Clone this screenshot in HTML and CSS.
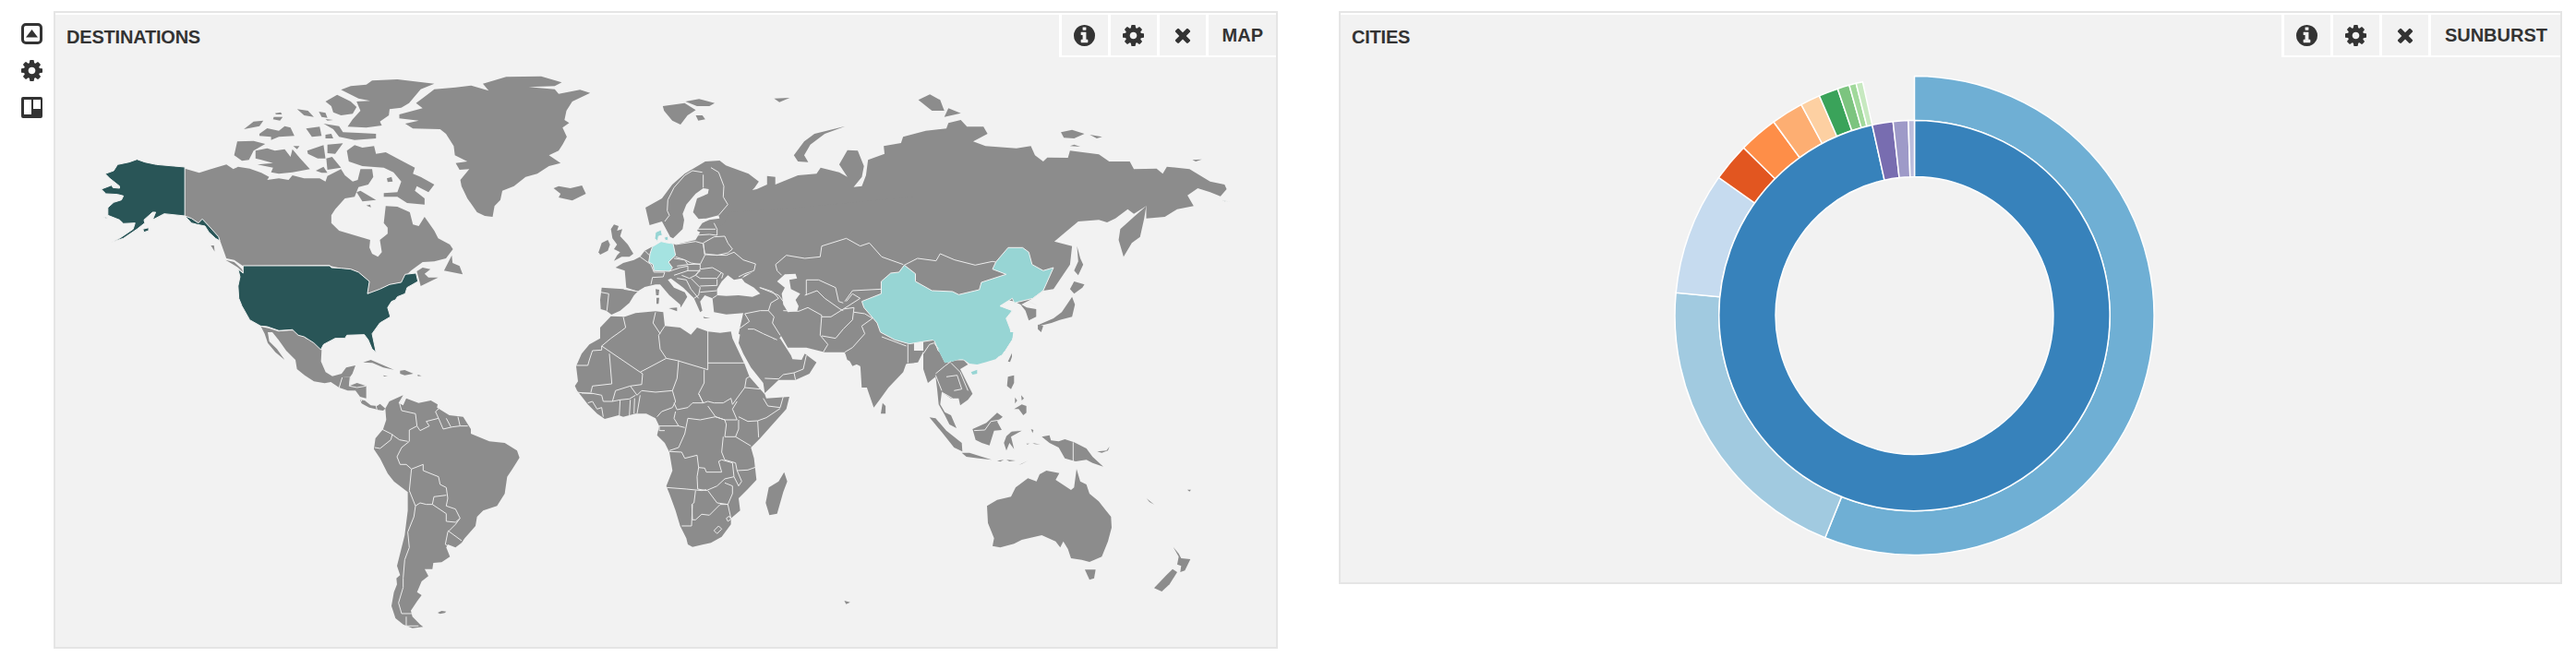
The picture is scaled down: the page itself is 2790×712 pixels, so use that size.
FILE: index.html
```html
<!DOCTYPE html>
<html lang="en">
<head>
<meta charset="utf-8">
<title>Dashboard</title>
<link rel="stylesheet" href="styles.css">
</head>
<body>
<svg class="defs" width="0" height="0" aria-hidden="true">
  <symbol id="i-cog" viewBox="128 128 1536 1536"><path d="M1152 896q0-106-75-181t-181-75-181 75-75 181 75 181 181 75 181-75 75-181zm512-109v222q0 12-8 23t-20 13l-185 28q-19 54-39 91 35 50 107 138 10 12 10 25t-9 23q-27 37-99 108t-94 71q-12 0-26-9l-138-108q-44 23-91 38-16 136-29 186-7 28-36 28h-222q-14 0-24.5-8.5t-11.5-21.5l-28-184q-49-16-90-37l-141 107q-10 9-25 9-14 0-25-11-126-114-165-168-7-10-7-23 0-12 8-23 15-21 51-66.5t54-70.5q-27-50-41-99l-183-27q-13-2-21-12.5t-8-23.5v-222q0-12 8-23t19-13l186-28q14-46 39-92-40-57-107-138-10-12-10-24 0-10 9-23 26-36 98.5-107.5t94.5-71.5q13 0 26 10l138 107q44-23 91-38 16-136 29-186 7-28 36-28h222q14 0 24.5 8.5t11.5 21.5l28 184q49 16 90 37l142-107q9-9 24-9 13 0 25 10 129 119 165 170 7 8 7 22 0 12-8 23-15 21-51 66.5t-54 70.5q26 50 41 98l183 28q13 2 21 12.5t8 23.5z"/></symbol>
  <symbol id="i-info" viewBox="128 128 1536 1536"><path d="M1152 1376v-160q0-14-9-23t-23-9h-96v-512q0-14-9-23t-23-9h-320q-14 0-23 9t-9 23v160q0 14 9 23t23 9h96v320h-96q-14 0-23 9t-9 23v160q0 14 9 23t23 9h448q14 0 23-9t9-23zm-128-896v-160q0-14-9-23t-23-9h-192q-14 0-23 9t-9 23v160q0 14 9 23t23 9h192q14 0 23-9t9-23zm640 416q0 209-103 385.5t-279.5 279.5-385.5 103-385.5-103-279.5-279.5-103-385.5 103-385.5 279.5-279.5 385.5-103 385.5 103 279.5 279.5 103 385.5z"/></symbol>
  <symbol id="i-x" viewBox="110 238 1188 1316"><path d="M1298 1322q0 40-28 68l-136 136q-28 28-68 28t-68-28l-294-294-294 294q-28 28-68 28t-68-28l-136-136q-28-28-28-68t28-68l294-294-294-294q-28-28-28-68t28-68l136-136q28-28 68-28t68 28l294 294 294-294q28-28 68-28t68 28l136 136q28 28 28 68t-28 68l-294 294 294 294q28 28 28 68z"/></symbol>
</svg>
<div class="page">
  <nav class="sidebar">
    <svg class="side-icon" viewBox="0 0 23 23"><rect x="1.5" y="1.5" width="20" height="20" rx="3.5" class="ic-line"/><path d="M5 15.5 11.5 7 18 15.5z"/></svg>
    <svg class="side-icon"><use href="#i-cog"/></svg>
    <svg class="side-icon" viewBox="0 0 23 23"><path fill-rule="evenodd" d="M2 0h19a2 2 0 0 1 2 2v19a2 2 0 0 1-2 2H2a2 2 0 0 1-2-2V2a2 2 0 0 1 2-2zM3 3v16h8V3zm10 0v10h8V3z"/></svg>
  </nav>

  <section class="panel panel-map">
    <header class="panel-head">
      <h2 class="panel-title">DESTINATIONS</h2>
      <div class="tools">
        <button class="tool"><svg class="tool-icon"><use href="#i-info"/></svg></button>
        <button class="tool"><svg class="tool-icon"><use href="#i-cog"/></svg></button>
        <button class="tool"><svg class="tool-x"><use href="#i-x"/></svg></button>
        <button class="tool tool-text">MAP</button>
      </div>
    </header>
    <svg class="map" viewBox="60 62 1322 639">
      <!-- coordinates in zoomed frames: each group maps to page pixels -->
      <g transform="translate(60,60) scale(.4209,.3333)" class="land">
        <path d="M1100,92 L1160,70 L1250,68 L1303,88 L1285,100 L1218,103 L1285,110 L1295,125 L1350,112 L1376,122 L1330,150 L1315,180 L1310,210 L1322,220 L1305,235 L1316,265 L1305,290 L1295,310 L1270,325 L1300,350 L1270,360 L1240,385 L1210,395 L1180,425 L1150,440 L1145,470 L1130,490 L1125,525 L1105,522 L1085,510 L1060,465 L1045,425 L1042,405 L1065,370 L1040,372 L1030,350 L1060,345 L1028,325 L1025,295 L1005,255 L990,240 L920,238 L900,222 L935,212 L885,205 L885,192 L945,172 L928,155 L955,130 L975,110 L1030,104 L1070,98 L1115,115 Z"/>
        <path d="M333,368 L370,382 L400,370 L440,355 L458,370 L470,362 L500,368 L530,382 L550,395 L545,405 L575,400 L600,405 L610,390 L640,400 L680,400 L695,410 L700,392 L735,370 L745,390 L765,410 L778,405 L785,370 L815,370 L818,395 L805,420 L780,428 L770,460 L745,465 L720,500 L710,520 L710,545 L730,570 L770,585 L810,600 L808,625 L815,645 L830,655 L840,640 L835,600 L855,580 L855,560 L845,545 L850,490 L880,492 L912,510 L920,550 L935,555 L950,525 L975,570 L985,595 L1015,615 L1023,630 L1005,660 L975,670 L945,672 L915,700 L905,712 L928,708 L930,730 L890,738 L860,745 L835,760 L810,775 L803,770 L808,735 L780,705 L760,695 L735,692 L708,685 L706,682 L482,684 L460,665 L440,660 L430,625 L423,600 L395,555 L378,532 L368,545 L333,522 Z"/>
        <path d="M940,750 L985,722 L960,722 L950,710 L965,695 L945,690 L930,702 L935,725 Z"/>
        <path d="M1000,700 L1020,650 L1022,675 L1040,685 L1048,712 Z"/>
        <path d="M400,618 L408,618 L410,638 Z"/><path d="M438,665 L460,672 L480,695 L485,708 L470,690 Z"/>
        <path d="M735,112 L760,100 L800,95 L815,82 L880,78 L975,92 L940,110 L930,125 L910,155 L890,170 L860,175 L858,195 L835,215 L840,228 L800,235 L752,232 L765,208 L785,180 L775,150 L810,148 L780,140 Z"/>
        <path d="M695,150 L725,128 L760,150 L775,168 L765,190 L735,195 L715,185 L710,165 Z"/>
        <path d="M622,175 L650,180 L665,200 L640,195 Z"/><path d="M678,183 L695,187 L700,203 L685,200 Z"/><path d="M695,207 L715,210 L700,212 Z"/>
        <path d="M690,222 L730,230 L740,250 L780,252 L825,255 L825,270 L770,275 L730,265 L715,240 Z"/>
        <path d="M645,238 L680,232 L685,262 L660,265 Z"/><path d="M695,258 L710,255 L715,270 L695,270 Z"/>
        <path d="M562,200 L585,200 L578,212 L560,208 Z"/><path d="M565,188 L580,185 L583,192 L568,192 Z"/>
        <path d="M485,240 L510,215 L535,212 L525,230 Z"/>
        <path d="M525,255 L545,237 L575,245 L590,230 L605,235 L615,262 L575,265 L555,275 L555,265 L525,262 Z"/>
        <path d="M468,280 L510,278 L540,288 L510,310 L498,340 L480,343 L460,325 Z"/>
        <path d="M515,310 L545,302 L565,310 L590,305 L605,330 L610,305 L630,335 L655,370 L610,380 L575,385 L555,380 L560,365 L520,355 L560,350 L530,340 L515,335 Z"/>
        <path d="M612,295 L628,295 L622,305 Z"/><path d="M648,310 L690,292 L695,335 L675,335 L650,320 Z"/><path d="M700,290 L740,286 L720,320 L700,318 Z"/>
        <path d="M750,310 L770,292 L790,300 L820,295 L825,320 L850,315 L880,335 L925,365 L920,385 L940,395 L975,420 L960,445 L930,425 L925,440 L950,465 L950,485 L905,480 L880,460 L845,460 L845,448 L880,445 L890,410 L870,380 L845,365 L790,360 L755,345 Z"/>
        <path d="M775,445 L785,440 L825,470 L790,475 Z"/><path d="M697,335 L712,330 L735,365 L700,372 Z"/><path d="M670,375 L690,362 L700,382 L685,382 Z"/>
        <path d="M853,400 L865,395 L868,410 L855,412 Z"/><path d="M800,488 L810,485 L812,494 Z"/>
        <path d="M1282,432 L1295,425 L1325,432 L1355,423 L1365,450 L1330,472 L1295,462 L1300,450 Z"/>
      </g>

      <g transform="translate(650,60) scale(.4464,.3333)" class="land">
        <path d="M110,495 L150,465 L175,420 L205,385 L255,345 L290,342 L305,358 L320,365 L360,385 L385,410 L375,430 L350,465 L340,455 L325,425 L345,425 L345,445 L380,435 L405,420 L405,392 L425,395 L425,420 L480,390 L525,385 L535,365 L580,380 L600,395 L580,355 L600,308 L625,310 L640,360 L635,395 L615,428 L635,425 L645,390 L650,340 L690,320 L688,295 L730,285 L735,265 L790,245 L840,238 L845,220 L875,210 L890,232 L930,232 L940,255 L905,280 L935,295 L1010,302 L1045,295 L1055,325 L1075,345 L1085,332 L1135,333 L1140,310 L1210,322 L1235,345 L1285,345 L1295,370 L1350,368 L1365,385 L1375,362 L1430,370 L1480,410 L1515,420 L1520,435 L1505,458 L1480,445 L1450,432 L1425,455 L1440,490 L1400,500 L1370,525 L1325,530 L1325,490 L1295,515 L1280,500 L1250,530 L1230,543 L1210,535 L1160,540 L1102,605 L1145,620 L1140,680 L1100,760 L1075,765 L1050,790 L1022,810 L1035,820 L1058,825 L1058,850 L1040,862 L1032,830 L1020,810 L1005,800 L940,780 L640,790 L300,640 L200,610 L170,590 L150,540 L120,552 Z"/>
        <path d="M152,165 L205,155 L232,178 L212,195 L195,225 L175,212 L155,180 Z"/><path d="M207,150 L240,142 L278,155 L265,165 L235,165 Z"/><path d="M232,195 L248,195 L255,208 L238,212 Z"/>
        <path d="M422,140 L460,138 L435,152 Z"/>
        <path d="M595,230 L520,255 L495,280 L470,325 L480,345 L505,347 L495,325 L510,290 L545,255 Z"/>
        <path d="M772,145 L800,127 L825,145 L835,180 L805,180 Z"/><path d="M845,172 L875,188 L835,200 Z"/>
        <path d="M1118,250 L1145,242 L1175,255 L1150,270 L1125,268 Z"/><path d="M1188,258 L1218,265 L1205,270 Z"/><path d="M1140,295 L1165,297 L1150,290 Z"/>
        <path d="M1437,340 L1460,338 L1445,345 Z"/>
        <path d="M1157,620 L1165,660 L1172,680 L1160,715 L1150,700 L1160,670 Z"/>
        <path d="M1325,490 L1320,530 L1310,590 L1290,610 L1270,655 L1258,600 L1262,565 L1295,525 Z"/>
        <path d="M1150,735 L1175,745 L1170,755 L1150,775 L1140,760 Z"/>
        <path d="M1145,785 L1152,810 L1145,850 L1115,860 L1095,870 L1065,880 L1065,875 L1100,855 L1120,835 Z"/>
        <path d="M1062,875 L1075,880 L1070,900 L1062,890 Z"/>
      </g>

      <g transform="translate(630,180) scale(.3333)" class="land">
        <path d="M290,250 L230,262 L205,275 L190,295 L170,305 L135,315 L110,330 L140,340 L145,395 L185,408 L165,405 L135,400 L65,395 L60,435 L62,465 L80,470 L97,483 L125,470 L155,445 L170,420 L185,405 L205,393 L240,385 L255,385 L285,420 L320,450 L322,460 L343,425 L335,410 L300,395 L280,370 L290,365 L330,395 L365,430 L385,475 L392,470 L385,440 L400,420 L425,430 L430,475 L470,482 L525,478 L510,545 L530,555 L640,565 L648,552 L670,590 L730,590 L790,605 L855,605 L880,650 L905,640 L910,720 L990,720 L1010,670 L1060,640 L1080,640 L1080,100 L640,140 L480,150 L460,190 Z"/>
        <path d="M95,205 L105,190 L120,195 L115,210 L132,205 L125,228 L150,255 L168,285 L155,295 L130,295 L105,308 L115,290 L125,280 L105,270 L115,255 L100,235 Z"/>
        <path d="M55,280 L65,250 L85,240 L92,255 L85,275 L60,288 Z"/>
        <path d="M240,400 L252,402 L250,420 L242,420 Z"/><path d="M243,428 L252,428 L250,448 L243,448 Z"/><path d="M283,462 L310,460 L310,472 Z"/>
        <path d="M395,490 L418,495 L398,495 Z"/>
      </g>

      <g transform="translate(630,180) scale(.3333)" class="sea">
        <path d="M413,75 L395,72 L370,90 L340,125 L328,155 L333,175 L328,205 L300,232 L285,250 L305,255 L370,240 L385,215 L375,210 L392,185 L415,175 L448,170 L445,160 L405,170 L380,172 L362,150 L375,105 L410,90 Z"/>
        <path d="M262,190 L270,225 L282,250 L240,250 L232,205 Z"/>
        <path d="M440,400 L455,375 L475,355 L495,370 L520,365 L530,355 L555,345 L520,365 L530,378 L560,395 L580,415 L555,425 L510,420 L470,422 L440,420 Z"/>
        <path d="M635,375 L660,352 L695,350 L700,365 L675,370 L680,400 L710,415 L695,435 L705,455 L700,472 L670,475 L655,450 L650,415 L660,395 Z"/>
      </g>

      <g transform="translate(610,320) scale(.3333)" class="land">
        <path d="M155,68 L200,70 L235,58 L300,52 L325,55 L330,100 L380,105 L415,128 L435,105 L470,118 L510,122 L545,118 L550,140 L590,225 L605,265 L640,305 L655,322 L660,335 L735,330 L725,370 L680,420 L640,465 L610,495 L620,530 L628,600 L600,630 L570,660 L575,700 L545,725 L545,745 L515,785 L480,805 L420,818 L405,810 L400,790 L380,750 L365,700 L345,645 L335,620 L355,570 L345,510 L330,480 L305,455 L312,425 L300,400 L270,385 L235,385 L195,395 L180,390 L135,402 L110,385 L80,355 L45,310 L38,295 L48,280 L42,230 L60,190 L85,160 L120,140 L120,105 Z"/>
        <path d="M718,575 L728,605 L715,640 L695,710 L670,715 L658,675 L668,625 L700,605 Z"/>
        <path d="M570,155 L575,125 L590,105 L640,110 L685,145 L705,140 L740,195 L745,208 L775,210 L785,190 L823,218 L800,255 L755,275 L700,275 L655,318 L650,285 L610,235 L585,190 Z"/>
      </g>

      <g transform="translate(280,340) scale(.3333)" class="land">
        <path d="M8,42 L35,48 L65,58 L100,55 L125,55 L155,82 L175,82 L205,118 L203,155 L218,190 L240,203 L270,195 L285,175 L315,168 L305,195 L298,205 L272,207 L262,240 L235,222 L215,226 L180,220 L150,200 L125,180 L120,150 L90,120 L65,85 L45,60 L30,60 L35,90 L60,115 L85,150 L55,125 L30,95 L20,65 Z"/>
        <path d="M262,240 L272,207 L298,205 L295,235 L320,225 L350,235 L350,275 L330,270 L315,250 L290,250 Z"/>
        <path d="M330,280 L345,282 L365,298 L385,300 L395,293 L412,308 L405,315 L385,312 L380,310 L360,305 L335,292 Z"/>
        <path d="M340,158 L365,150 L400,165 L440,182 L405,175 L370,160 Z"/><path d="M460,185 L475,183 L503,195 L475,200 L460,195 Z"/>
        <path d="M405,200 L420,203 L408,204 Z"/><path d="M517,198 L530,202 L518,203 Z"/>
        <path d="M412,308 L425,285 L470,265 L455,290 L470,298 L480,275 L520,290 L560,282 L582,295 L580,305 L620,330 L665,335 L690,375 L690,390 L710,398 L750,415 L800,420 L840,445 L848,468 L825,505 L808,530 L800,585 L775,625 L730,640 L710,660 L705,690 L670,730 L660,745 L640,760 L615,750 L610,760 L622,790 L595,808 L568,810 L565,830 L540,830 L552,853 L530,870 L515,905 L530,915 L515,935 L495,965 L500,985 L525,1010 L535,1018 L500,1022 L470,1010 L445,990 L432,950 L440,905 L450,880 L448,860 L460,850 L450,820 L460,780 L475,720 L485,640 L485,580 L440,545 L420,520 L395,470 L375,440 L380,405 L405,375 L415,345 Z"/>
        <path d="M582,972 L595,966 L610,968 L605,973 L590,976 Z"/>
      </g>

      <g transform="translate(350,380) scale(.6378,.3333)" class="land">
        <path d="M850,0 L885,0 L890,30 L912,50 L925,130 L935,185 L945,160 L960,120 L985,70 L990,43 L1010,38 L1020,0 Z"/>
        <path d="M950,170 L955,180 L955,205 L947,205 Z"/>
        <path d="M885,813 L895,818 L888,824 Z"/>
      </g>

      <g transform="translate(1000,360) scale(.3333)" class="land">
        <path d="M0,25 L25,22 L48,35 L50,60 L70,100 L95,95 L125,85 L145,105 L120,120 L145,170 L160,200 L145,220 L120,238 L115,215 L90,215 L60,195 L55,235 L70,260 L90,270 L108,312 L85,300 L70,270 L50,235 L45,185 L40,145 L15,165 L0,120 Z"/>
        <path d="M275,95 L288,68 L288,80 L282,97 Z"/>
        <path d="M20,277 L40,280 L75,320 L125,360 L127,388 L100,375 L60,325 Z"/>
        <path d="M125,392 L150,392 L222,415 L180,410 L140,405 Z"/>
        <path d="M160,315 L205,295 L240,262 L258,275 L240,290 L255,318 L230,320 L215,368 L190,360 L170,350 Z"/>
        <path d="M262,360 L270,338 L285,325 L320,318 L280,325 L320,320 L285,340 L295,380 L280,360 L270,385 Z"/>
        <path d="M385,340 L410,335 L415,352 L440,355 L460,348 L490,358 L530,378 L550,405 L585,437 L550,425 L530,415 L495,420 L460,410 L440,375 L410,360 Z"/>
        <path d="M565,388 L595,385 L605,372 L600,385 L580,392 Z"/>
        <path d="M275,145 L295,140 L295,165 L285,185 L272,175 Z"/>
        <path d="M295,250 L320,235 L335,240 L335,262 L325,270 L310,250 Z"/>
        <path d="M298,212 L305,222 L298,232 Z"/><path d="M318,205 L327,215 L320,222 Z"/>
        <path d="M240,418 L262,415 L250,421 Z"/><path d="M270,415 L300,417 L280,420 Z"/><path d="M310,432 L340,418 L320,428 Z"/>
        <path d="M350,315 L358,318 L355,328 Z"/><path d="M335,362 L345,362 L338,365 Z"/><path d="M355,360 L380,365 L362,364 Z"/>
        <path d="M207,565 L240,545 L285,535 L300,505 L340,475 L368,485 L378,462 L400,450 L442,458 L430,480 L480,513 L490,505 L498,445 L510,485 L530,495 L540,525 L570,550 L590,575 L610,600 L612,635 L600,680 L580,730 L540,747 L515,740 L480,735 L470,705 L455,680 L445,700 L430,680 L385,660 L320,675 L295,688 L250,700 L225,695 L230,670 L210,620 Z"/>
        <path d="M525,772 L560,772 L555,800 L540,805 Z"/>
        <path d="M812,698 L830,720 L838,735 L868,738 L850,775 L835,780 L838,760 L825,755 L830,730 Z"/>
        <path d="M750,832 L790,790 L810,770 L825,780 L800,820 L775,843 Z"/>
        <path d="M725,540 L750,560 L735,552 Z"/><path d="M858,512 L870,512 L865,518 Z"/>
      </g>

      <!-- highlighted countries -->
      <g transform="translate(60,60) scale(.4209,.3333)" class="hi-dark">
        <path d="M333,363 L305,360 L260,355 L230,347 L210,338 L190,347 L160,355 L150,375 L128,385 L140,400 L165,425 L165,432 L148,430 L145,422 L118,435 L130,450 L160,452 L175,457 L170,470 L150,478 L135,495 L135,520 L165,535 L175,547 L205,545 L200,565 L165,595 L143,608 L175,595 L210,565 L230,545 L228,535 L250,510 L258,510 L250,535 L280,515 L333,522 L350,530 L368,545 L378,532 L395,555 L420,590 L423,603 L412,595 L395,575 L385,555 L365,550 L350,545 L333,522 Z"/>
        <path d="M225,565 L240,560 L240,570 L228,575 Z"/><path d="M125,525 L135,527 L130,530 Z"/>
        <path d="M483,684 L706,684 L710,690 L735,692 L760,695 L780,705 L808,735 L803,775 L835,760 L860,745 L890,738 L900,712 L928,708 L933,735 L905,755 L900,775 L880,785 L875,795 L865,800 L855,820 L862,850 L835,870 L815,905 L825,965 L815,955 L805,925 L795,908 L750,910 L745,920 L720,920 L690,940 L683,957 L665,935 L640,915 L625,910 L610,892 L575,895 L545,882 L528,880 L500,860 L480,815 L472,790 L470,750 L475,720 L470,695 L483,708 Z"/>
      </g>
      <g transform="translate(650,60) scale(.4464,.3333)" class="hi-dark">
        <path d="M1510,470 L1528,477 L1515,475 Z"/>
      </g>
      <g transform="translate(650,60) scale(.4464,.3333)" class="hi-teal">
        <path d="M738,682 L765,710 L765,735 L805,765 L855,768 L870,778 L920,762 L925,738 L985,712 L952,695 L960,672 L990,625 L1025,625 L1040,640 L1048,680 L1075,700 L1100,690 L1075,765 L1050,790 L1005,805 L1000,790 L970,815 L1000,830 L985,855 L995,890 L1000,925 L975,975 L950,990 L850,990 L820,960 L810,925 L750,938 L715,925 L680,900 L672,870 L640,820 L635,800 L682,775 L682,735 L705,708 L725,705 Z"/>
      </g>
      <g transform="translate(1000,360) scale(.3333)" class="hi-teal-fill">
        <path d="M0,0 L292,0 L290,18 L265,60 L235,88 L200,98 L175,105 L150,102 L125,85 L95,95 L70,100 L50,60 L48,35 L25,22 L0,25 Z"/>
        <path d="M155,130 L175,122 L175,135 L160,138 Z"/>
      </g>
      <g transform="translate(630,180) scale(.3333)" class="hi-teal">
        <path d="M240,215 L258,207 L262,225 L250,228 L247,245 L237,235 Z"/><path d="M268,232 L280,228 L282,240 L272,242 Z"/>
      </g>
      <g transform="translate(630,180) scale(.3333)" class="hi-light">
        <path d="M230,262 L258,245 L280,250 L297,252 L305,290 L282,312 L295,330 L285,342 L235,340 L232,320 L218,312 L222,285 Z"/>
      </g>

      <!-- country borders -->
      <g transform="translate(630,180) scale(.3333)" class="borders">
        <path d="M392,20 L360,15 L335,30 L300,70 L280,110 L278,145 L285,160 L270,180"/>
        <path d="M395,28 L395,70 M420,5 L445,20 L462,65 L460,100 L475,125 L445,160"/>
        <path d="M370,225 L415,222 L440,225 L440,205 L430,185 M375,205 L435,205"/>
        <path d="M395,250 L430,230 L465,228 L475,250 L490,270 L475,282 L440,290 L400,285 L395,250"/>
        <path d="M305,255 L370,245 L395,252 L400,290 L385,320 L355,315 L335,305 L305,295"/>
        <path d="M400,288 L470,290 L495,280 L525,305 L565,318 L560,340 L530,350 L510,360 M385,335 L425,330 L460,350 L455,365"/>
        <path d="M385,320 L385,335 L370,355 L385,365 L440,365 L455,345 M385,390 L440,388 L440,368"/>
        <path d="M300,300 L335,305 L345,320 L310,325 M345,320 L385,318 M285,342 L320,330 L345,325 L345,340 L300,355 M345,340 L385,340 L370,355 L350,365 L325,355"/>
        <path d="M235,345 L270,345 L265,360 L230,362 L225,385 M137,400 L185,408 M62,410 L88,415 L82,470 M190,295 L225,320 L235,345 M205,275 L220,290"/>
        <path d="M310,365 L340,370 L355,400 L380,430 M355,365 L385,395 L380,420 L365,430 M385,410 L440,405 M425,430 L440,420"/>
        <path d="M580,395 L620,408 L640,430 L615,445 L607,470 M578,395 L640,420 L655,440"/>
        <path d="M607,470 L580,470 L530,480 L545,505 L510,530 M607,470 L625,490 L620,510 L645,550 M540,530 L560,530 L590,545 L635,565"/>
        <path d="M655,470 L705,472 L735,460 L780,485 L775,550 L800,580 L785,605"/>
        <path d="M730,370 L770,370 L825,395 L835,440 L850,445 M725,420 L765,405 L790,430 L840,465 L850,470"/>
        <path d="M780,490 L810,490 L850,465 L885,460 L880,500 L850,530 L825,560 L780,552"/>
        <path d="M885,475 L920,480 L945,495 L910,520 L920,545 L880,590 L855,605"/>
        <path d="M630,320 L665,290 L725,300 L775,295 L780,260 L860,235 L905,260 L935,250 L975,295 L1045,320 M630,320 L635,340 L650,355 M730,370 L730,420 M855,440 L880,405 L975,400 M860,440 L880,415 L905,430 L850,465"/>
        <path d="M975,555 L1055,585 M1060,580 L1060,640"/>
      </g>
      <g transform="translate(650,60) scale(.4464,.3333)" class="borders">
        <path d="M738,682 L770,660 L815,668 L825,645 L860,665 L910,682 L952,670 L960,672"/>
        <path d="M1075,765 L1050,790 M1040,800 L1058,812"/>
      </g>
      <g transform="translate(610,320) scale(.3333)" class="borders">
        <path d="M125,165 L155,140 L190,115 L203,105 L195,70 M125,165 L125,178 L95,180 L85,210 L80,228 L42,228 M125,165 L250,250 L335,205 L315,175 L310,130 L330,100"/>
        <path d="M300,55 L292,90 L315,125 M335,205 L370,212 L470,242 L470,115 M470,220 L590,220 M150,190 L158,288 L95,295 L90,315"/>
        <path d="M250,250 L258,255 L255,290 L218,295 L240,325 L255,310 L300,315 L355,310 L365,345 L355,365 L320,378 L305,395"/>
        <path d="M375,212 L370,270 L355,310 M458,242 L458,285 L440,320 L455,350 L420,350 L405,365 L370,372 L360,350"/>
        <path d="M218,295 L170,310 L160,345 L130,345 M160,345 L185,340 L215,337 L235,325 M185,340 L182,395 M218,340 L215,392 M232,335 L230,385 M250,325 L240,385"/>
        <path d="M130,345 L125,325 L90,318 L60,318 M40,315 L95,320 M80,350 L95,345 L110,370 L125,365 L130,395"/>
        <path d="M440,320 L455,350 L470,345 L490,350 L520,350 L545,335 L550,355 L590,300 M470,360 L495,395 L525,405 L565,405 L550,370 L565,345"/>
        <path d="M590,300 L595,270 L605,265 M590,300 L640,305 M650,335 L665,360 L705,365 L715,330 M705,368 L660,398 L632,408 L600,410 L570,395 M632,408 L635,462"/>
        <path d="M570,405 L570,435 L560,460 L610,490 M560,460 L525,460 L530,420 L525,405 M525,405 L495,395 L445,405 L405,400 L395,450 L375,495 L345,505"/>
        <path d="M365,378 L360,400 L375,425 L312,425 L312,440 L330,440 M375,425 L395,430"/>
        <path d="M345,508 L385,510 L395,530 L435,520 L440,560 L460,562 L465,575 L515,575 L505,540 L515,535 L550,545 L555,590"/>
        <path d="M440,560 L435,590 L437,630 L465,635 L500,620 L525,597 L555,590 M335,625 L400,630 L450,635 L465,632"/>
        <path d="M430,635 L425,675 L418,680 L420,730 L430,730 L450,712 L475,715 L510,680 L535,680 L545,725 M420,680 L417,750 L385,750"/>
        <path d="M470,635 L500,675 L535,680 L550,645 L550,620 L525,610 M555,590 L570,620 L580,605 L565,570 L560,545 L525,535 L515,510 L520,460 M565,570 L600,568 L628,558"/>
        <path d="M490,765 L505,750 L515,760 L500,775 Z M530,725 L540,718 L545,728 L535,735 Z"/>
        <path d="M655,270 L700,272 L715,258 L750,252 L780,240 L790,195 M750,252 L755,275"/>
      </g>
      <g transform="translate(280,340) scale(.3333)" class="borders">
        <path d="M272,207 L262,240 M298,205 L295,235 M295,235 L320,240 L350,235 M330,270 L335,285 M385,312 L382,300"/>
        <path d="M470,270 L458,290 L465,315 L510,325 L515,365 L490,378 L490,415 L465,435 L450,465 L460,490 L480,490 L497,505"/>
        <path d="M400,375 L430,390 L458,410 L485,415 M435,392 L430,410 L395,438 L378,435"/>
        <path d="M515,365 L525,380 L555,365 L545,350 L585,340 L575,318 L590,305 M585,340 L600,375 L630,368 L655,365 L680,365 M610,340 L625,368 M648,335 L655,365"/>
        <path d="M497,505 L535,490 L535,510 L585,530 L590,555 L610,565 L615,600 L610,625 L640,635 L655,665 L640,685 L615,710 L607,750 L615,755"/>
        <path d="M497,505 L490,575 L510,625 L525,615 L545,620 L565,620 L610,650 L610,675 L640,678 L655,665 M565,620 L570,595 L610,590 M615,705 L660,738"/>
        <path d="M510,625 L505,660 L485,710 L490,760 L475,800 L470,860 L470,890 L455,940 L465,975 L500,975 M480,985 L480,1015 L520,1015"/>
      </g>
      <g transform="translate(1000,360) scale(.3333)" class="borders">
        <path d="M0,70 L20,40 L35,35 L50,55 M40,135 L70,110 L90,95 M60,190 L50,165 L40,140 M90,100 L120,130 L145,190 M75,145 L110,140 L125,185 L100,190 M60,195 L95,215"/>
        <path d="M165,320 L200,318 L220,290 L250,285"/>
        <path d="M487,358 L487,420"/>
      </g>
    </svg>
  </section>

  <section class="panel panel-sun">
    <header class="panel-head">
      <h2 class="panel-title">CITIES</h2>
      <div class="tools">
        <button class="tool"><svg class="tool-icon"><use href="#i-info"/></svg></button>
        <button class="tool"><svg class="tool-icon"><use href="#i-cog"/></svg></button>
        <button class="tool"><svg class="tool-x"><use href="#i-x"/></svg></button>
        <button class="tool tool-text">SUNBURST</button>
      </div>
    </header>
    <svg class="sunburst" id="sunburst" viewBox="1452 62 1321 569"></svg>
  </section>
</div>
<script src="sunburst.js"></script>
</body>
</html>
```

FILE: styles.css
```css
* { box-sizing: border-box; }
html, body { margin: 0; padding: 0; background: #fff; }
body { font-family: "Liberation Sans", Arial, sans-serif; color: #333; }
.defs { position: absolute; }

.page { display: flex; align-items: flex-start; padding-top: 12px; }

.sidebar {
  width: 58px; flex: none;
  display: flex; flex-direction: column; gap: 17px;
  padding: 13px 0 0 23px;
}
.side-icon { width: 23px; height: 23px; display: block; fill: #333; }
.ic-line { fill: none; stroke: #333; stroke-width: 3; }

.panel { background: #f2f2f2; border: 2px solid #e5e5e5; flex: none; }
.panel-map { width: 1326px; }
.panel-sun { width: 1325px; margin-left: 66px; }

.panel-head {
  height: 48px;
  display: flex; align-items: stretch; justify-content: space-between;
  border-top: 2px solid #fff;
}
.panel-title {
  margin: 0; padding: 10px 0 0 12px;
  font-size: 20px; line-height: 28px; font-weight: 700;
  letter-spacing: -.2px; color: #333;
}
.tools { display: flex; align-items: stretch; }
.tool {
  width: 53px; padding: 0; margin: 0;
  display: flex; align-items: center; justify-content: center;
  background: #f2f2f2; color: #333;
  border: 0; border-left: 3px solid #fff; border-bottom: 2px solid #fff;
  font: 700 20px/28px "Liberation Sans", Arial, sans-serif;
}
.tool-text { width: auto; padding: 0 14px 0 15px; }
.tool-icon { width: 23px; height: 23px; fill: #333; display: block; }
.tool-x { width: 18px; height: 18px; fill: #333; display: block; }

.map { display: block; width: 1322px; height: 639px; }
.sunburst { display: block; width: 1321px; height: 569px; }

.land { fill: #8c8c8c; }
.sea { fill: #f2f2f2; }
.hi-dark path, .hi-teal path, .hi-light path {
  stroke: #f2f2f2; stroke-width: 1; vector-effect: non-scaling-stroke; stroke-linejoin: round;
}
.hi-dark { fill: #295557; }
.hi-teal, .hi-teal-fill { fill: #97d5d4; }
.hi-light { fill: #a5e3e1; }
.borders path {
  fill: none; stroke: #ececec; stroke-width: 1;
  vector-effect: non-scaling-stroke; stroke-linejoin: round;
}
.arc { stroke: #fff; stroke-width: 1.5; }
```

FILE: sunburst.js
```js
var CX = 2073.5, CY = 342;
var RINGS = [
  { r0: 150.4, r1: 211.6, start: 0, arcs: [
    [347.5, "#3782bb"], [353.7, "#786db0"], [358.2, "#9e9ac8"], [360, "#bcbddc"]
  ] },
  { r0: 211.6, r1: 259.5, start: 0, arcs: [
    [201.9, "#6fafd4"], [275.5, "#a1cae0"], [305.2, "#c6dbef"], [314.5, "#e25620"],
    [324, "#fe8e48"], [331.8, "#fdae72"], [336.6, "#fdd0a2"], [341.3, "#3aa35a"],
    [344.2, "#7cc47f"], [345.9, "#a1d99b"], [347.5, "#c7e9c0"]
  ] }
];

function pt(r, deg) {
  var a = deg * Math.PI / 180;
  return (CX + r * Math.sin(a)).toFixed(2) + " " + (CY - r * Math.cos(a)).toFixed(2);
}

var svg = document.getElementById("sunburst");
RINGS.slice().reverse().forEach(function (ring) {
  var from = ring.start;
  ring.arcs.forEach(function (arc) {
    var to = arc[0], big = to - from > 180 ? 1 : 0;
    var d = "M" + pt(ring.r1, from) +
      "A" + ring.r1 + " " + ring.r1 + " 0 " + big + " 1 " + pt(ring.r1, to) +
      "L" + pt(ring.r0, to) +
      "A" + ring.r0 + " " + ring.r0 + " 0 " + big + " 0 " + pt(ring.r0, from) + "Z";
    var p = document.createElementNS("http://www.w3.org/2000/svg", "path");
    p.setAttribute("d", d);
    p.setAttribute("fill", arc[1]);
    p.setAttribute("class", "arc");
    svg.appendChild(p);
    from = to;
  });
});
```
